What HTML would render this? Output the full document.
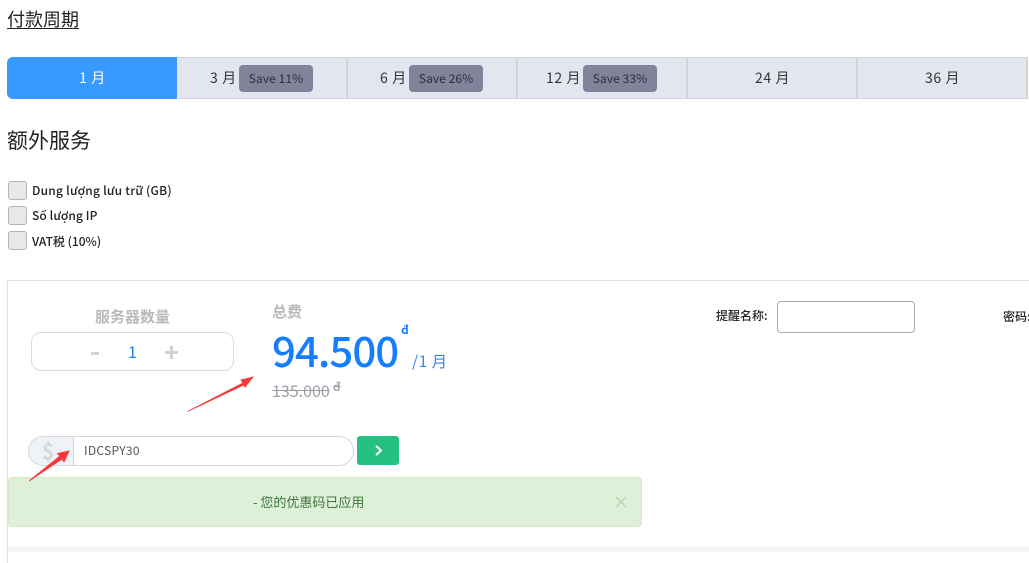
<!DOCTYPE html>
<html><head><meta charset="utf-8">
<style>
html,body{margin:0;padding:0;background:#fff;width:1029px;height:563px;overflow:hidden}
body{position:relative;font-family:"DejaVu Sans","Noto Sans CJK SC",sans-serif;color:#222}
.a{position:absolute;white-space:nowrap}
.cj{font-family:"Noto Sans CJK SC",sans-serif}
.tab{position:absolute;top:57px;height:42px;box-sizing:border-box;background:#e3e6ef;border:1px solid #d3d3d8;border-right:2px solid #d3d3d8;border-left:0;width:170px;font:14px/40px "Noto Sans CJK SC",sans-serif;color:#333;letter-spacing:.6px}
.tab span.t{position:absolute;top:0;white-space:nowrap}
.badge{position:absolute;top:7px;width:74px;height:27px;background:#80849b;border-radius:4px;font:12px/27px "Noto Sans CJK SC",sans-serif;color:#2c2c3c;text-align:center;letter-spacing:.1px}
.cb{position:absolute;left:8px;width:19px;height:19px;box-sizing:border-box;background:#e8e8e8;border:1px solid #b4b4b4;border-radius:3px}
.lb{position:absolute;left:32px;font:12px/16px "Noto Sans CJK SC",sans-serif;color:#222;white-space:nowrap;font-weight:500}
</style></head><body>
<div class="a cj" style="left:7px;top:6px;font-size:18px;line-height:26px;color:#222;text-decoration:underline;text-underline-offset:2px">付款周期</div>

<div class="a cj" style="left:7px;top:57px;width:170px;height:42px;background:#3899ff;border-radius:6px 0 0 6px;color:#fff;font-size:14px;line-height:42px;text-align:center;letter-spacing:.6px;text-indent:1px">1 月</div>
<div class="tab" style="left:177px;width:171px"><span class="t" style="left:33px">3 月</span><div class="badge" style="left:62px">Save 11%</div></div>
<div class="tab" style="left:348px"><span class="t" style="left:32px">6 月</span><div class="badge" style="left:61px">Save 26%</div></div>
<div class="tab" style="left:518px"><span class="t" style="left:28px">12 月</span><div class="badge" style="left:65px">Save 33%</div></div>
<div class="tab" style="left:688px"><span class="t" style="left:67px">24 月</span></div>
<div class="tab" style="left:858px"><span class="t" style="left:67px">36 月</span></div>

<div class="a cj" style="left:7px;top:125px;font-size:21px;line-height:30px;color:#222">额外服务</div>

<div class="cb" style="top:181px"></div><div class="lb" style="top:183px;letter-spacing:.24px">Dung lượng lưu trữ (GB)</div>
<div class="cb" style="top:206px"></div><div class="lb" style="top:208px;letter-spacing:.1px">Số lượng IP</div>
<div class="cb" style="top:231px"></div><div class="lb" style="top:234px">VAT税 (10%)</div>

<div class="a" style="left:7px;top:280px;width:1030px;height:300px;box-sizing:border-box;border:1px solid #e4e4e4"></div>

<div class="a cj" style="left:95px;top:307px;font-size:15px;line-height:20px;font-weight:700;color:#b9b9b9">服务器数量</div>
<div class="a" style="left:31px;top:332px;width:203px;height:39px;box-sizing:border-box;border:1px solid #dcdcdc;border-radius:10px"></div>
<div class="a" style="left:91px;top:352px;width:8px;height:3px;background:#cfd3d8"></div>
<div class="a cj" style="left:128px;top:340px;font-size:16px;line-height:22px;color:#1a7cf5">1</div>
<div class="a" style="left:165px;top:351px;width:13px;height:3px;background:#cfd3d8"></div>
<div class="a" style="left:170px;top:346px;width:3px;height:13px;background:#cfd3d8"></div>

<div class="a cj" style="left:272px;top:302px;font-size:15px;line-height:20px;font-weight:700;color:#b9b9b9">总费</div>
<div class="a cj" style="left:272px;top:320px;font-size:42px;line-height:60px;font-weight:500;color:#177dff;letter-spacing:-1px">94.500</div>
<div class="a cj" style="left:401px;top:322px;font-size:12px;line-height:16px;font-weight:700;color:#177dff">đ</div>
<div class="a cj" style="left:412px;top:350px;font-size:15.5px;line-height:22px;color:#2d86f5;letter-spacing:.5px">/1 月</div>
<div class="a cj" style="left:272px;top:379px;font-size:16px;line-height:22px;color:#9a9ea6;text-decoration:line-through">135.000</div>
<div class="a cj" style="left:333px;top:379px;font-size:12px;line-height:16px;font-weight:500;color:#9a9ea6;text-decoration:line-through">đ</div>

<div class="a" style="left:28px;top:436px;width:326px;height:30px;box-sizing:border-box;border:1px solid #d4d9df;border-radius:15px;background:#fff;overflow:hidden">
  <div style="position:absolute;left:0;top:0;width:44px;height:28px;background:#eff2f6;border-right:1px solid #d4d9df"></div>
</div>
<div class="a cj" style="left:42px;top:437px;font-size:21px;line-height:28px;font-weight:700;color:#d5d8dc">$</div>
<div class="a cj" style="left:84px;top:441px;font-size:12px;line-height:19px;color:#555;letter-spacing:.3px">IDCSPY30</div>
<div class="a" style="left:357px;top:436px;width:42px;height:29px;background:#25c182;border-radius:3px"></div>
<svg class="a" style="left:357px;top:436px" width="42" height="29" viewBox="0 0 42 29"><path d="M19 10l5 4.500-5 4.500" fill="none" stroke="#fff" stroke-width="2"/></svg>

<div class="a" style="left:8px;top:477px;width:634px;height:50px;box-sizing:border-box;background:#dff0d8;border:1px solid #d6e9c6;border-radius:4px"></div>
<div class="a cj" style="left:253px;top:493px;font-size:13px;line-height:18px;color:#3c763d">- 您的优惠码已应用</div>
<svg class="a" style="left:615px;top:496px" width="12" height="12" viewBox="0 0 12 12"><path d="M1 1l10 10M11 1L1 11" stroke="#c2d6ba" stroke-width="1.600" fill="none"/></svg>

<div class="a" style="left:8px;top:547px;width:1021px;height:5px;background:#f5f5f5"></div>

<div class="a cj" style="left:716px;top:308px;font-size:12px;line-height:16px;font-weight:500;color:#222">提醒名称:</div>
<div class="a" style="left:777px;top:301px;width:138px;height:32px;box-sizing:border-box;border:1px solid #a9a9a9;border-radius:4px;background:#fff"></div>
<div class="a cj" style="left:1003px;top:309px;font-size:12px;line-height:16px;font-weight:500;color:#222">密码:</div>

<svg class="a" style="left:0;top:0;pointer-events:none" width="1029" height="563" viewBox="0 0 1029 563">
  <path d="M187.500 411.500L243 383L241 380L253 377L245 387L243.500 385Z" fill="#f5393a" stroke="#f5393a" stroke-width=".9"/>
  <path d="M29 481L60 456L57.500 453.500L69 451L64 462L62 459Z" fill="#f5393a" stroke="#f5393a" stroke-width=".9"/>
</svg>
</body></html>
